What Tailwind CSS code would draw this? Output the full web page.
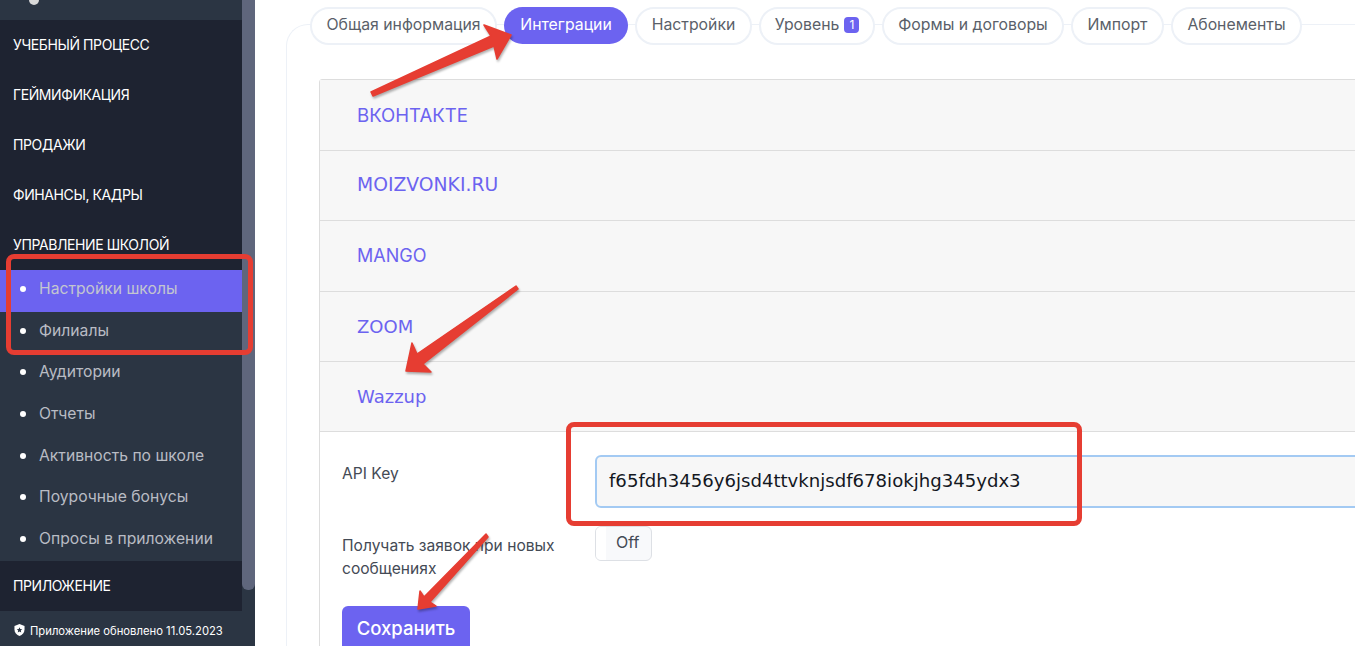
<!DOCTYPE html>
<html lang="ru">
<head>
    <meta charset="UTF-8">
    <title>Настройки школы</title>
    <script src="https://cdn.jsdelivr.net/npm/@tailwindcss/browser@4"></script>
</head>
<body class="h-[646px] overflow-hidden bg-white font-['Inter',sans-serif] relative">

    <div class="flex h-[646px]">
        <!-- Боковое меню -->
        <aside class="w-[242px] shrink-0 bg-[#2b3543] flex flex-col">
            <div class="h-5 pl-[29px] relative">
                <span class="block w-[10px] h-[10px] rounded-full bg-[#d9d9d9] -mt-[5px]"></span>
            </div>
            <div class="h-[50px] bg-[#1e2331] pl-[13px] pb-[2px] flex items-center text-[14px] tracking-[-0.4px] text-white">УЧЕБНЫЙ ПРОЦЕСС</div>
            <div class="h-[50px] bg-[#1e2331] pl-[13px] pb-[2px] flex items-center text-[14px] tracking-[-0.4px] text-white">ГЕЙМИФИКАЦИЯ</div>
            <div class="h-[50px] bg-[#1e2331] pl-[13px] pb-[2px] flex items-center text-[14px] tracking-[-0.4px] text-white">ПРОДАЖИ</div>
            <div class="h-[50px] bg-[#1e2331] pl-[13px] pb-[2px] flex items-center text-[14px] tracking-[-0.4px] text-white">ФИНАНСЫ, КАДРЫ</div>
            <div class="h-[50px] bg-[#1e2331] pl-[13px] pb-[2px] flex items-center text-[14px] tracking-[-0.4px] text-white">УПРАВЛЕНИЕ ШКОЛОЙ</div>

            <div class="h-[42px] bg-[#6c63f0] flex items-center pl-5 pb-[4px] text-[15.7px] text-[#c3c6cf]"><span class="w-[6px] h-[6px] rounded-full bg-white mr-[13px]"></span>Настройки школы</div>
            <div class="h-[41px] flex items-center pl-5 pb-[4px] text-[15.7px] text-[#b9bcc4]"><span class="w-[6px] h-[6px] rounded-full bg-white mr-[13px]"></span>Филиалы</div>
            <div class="h-[42px] flex items-center pl-5 pb-[4px] text-[15.7px] text-[#b9bcc4]"><span class="w-[6px] h-[6px] rounded-full bg-white mr-[13px]"></span>Аудитории</div>
            <div class="h-[42px] flex items-center pl-5 pb-[4px] text-[15.7px] text-[#b9bcc4]"><span class="w-[6px] h-[6px] rounded-full bg-white mr-[13px]"></span>Отчеты</div>
            <div class="h-[41px] flex items-center pl-5 pb-[4px] text-[15.7px] text-[#b9bcc4]"><span class="w-[6px] h-[6px] rounded-full bg-white mr-[13px]"></span>Активность по школе</div>
            <div class="h-[42px] flex items-center pl-5 pb-[4px] text-[15.7px] text-[#b9bcc4]"><span class="w-[6px] h-[6px] rounded-full bg-white mr-[13px]"></span>Поурочные бонусы</div>
            <div class="h-[41px] flex items-center pl-5 pb-[4px] text-[15.7px] text-[#b9bcc4]"><span class="w-[6px] h-[6px] rounded-full bg-white mr-[13px]"></span>Опросы в приложении</div>

            <div class="h-[50px] bg-[#1e2331] pl-[13px] pb-[2px] flex items-center text-[14px] tracking-[-0.4px] text-white">ПРИЛОЖЕНИЕ</div>
            <div class="h-[35px] pl-[14px] pt-[6px] flex items-center gap-[5px] text-[11.25px] text-white">
                <svg class="w-[11px] h-[12px] -mt-[3px]" viewBox="0 0 12 13"><path fill="#fff" d="M6 0 11.500 2v4c0 3.300-2.300 5.800-5.500 7C2.800 11.800.5 9.300.5 6V2z"/><path fill="#2b3543" d="M6 3.500 6.900 5.500 9 5.700 7.400 7.100 7.900 9.200 6 8.100 4.100 9.200 4.600 7.100 3 5.700 5.100 5.500z"/></svg>
                Приложение обновлено 11.05.2023
            </div>
        </aside>

        <!-- Полоса прокрутки -->
        <div class="w-[13px] shrink-0 bg-[#2b3543]">
            <div class="h-[590px] bg-[#5f667c] rounded-b-[6px]"></div>
        </div>

        <!-- Основная часть -->
        <main class="flex-1 min-w-0 pl-[31px] pt-[24px]">
            <div class="w-[1200px] h-[700px] relative border-l border-t border-[#edf1f7] rounded-tl-[22px] pl-[32px] pt-[54px]">
                <!-- Вкладки -->
                <div class="absolute left-[23px] -top-[18px] flex gap-[7px] text-[15.8px] text-[#5a5f69]">
                    <div class="w-[187px] h-[38px] pb-[2px] bg-white border-2 border-[#edf1f7] rounded-[19px] flex items-center justify-center">Общая информация</div>
                    <div class="w-[124px] h-[37px] pb-[2px] bg-[#6c63f0] rounded-[19px] flex items-center justify-center text-white">Интеграции</div>
                    <div class="w-[117px] h-[38px] pb-[2px] bg-white border-2 border-[#edf1f7] rounded-[19px] flex items-center justify-center">Настройки</div>
                    <div class="w-[116px] h-[38px] pb-[2px] bg-white border-2 border-[#edf1f7] rounded-[19px] flex items-center justify-center gap-[5px]">Уровень <span class="w-[15px] h-[16px] rounded-[4px] bg-[#6c63f0] text-white text-[12px] flex items-center justify-center">1</span></div>
                    <div class="w-[182px] h-[38px] pb-[2px] bg-white border-2 border-[#edf1f7] rounded-[19px] flex items-center justify-center">Формы и договоры</div>
                    <div class="w-[93px] h-[38px] pb-[2px] bg-white border-2 border-[#edf1f7] rounded-[19px] flex items-center justify-center">Импорт</div>
                    <div class="w-[131px] h-[38px] pb-[2px] bg-white border-2 border-[#edf1f7] rounded-[19px] flex items-center justify-center">Абонементы</div>
                </div>

                <!-- Аккордеон -->
                <div class="border border-[#dddddd] rounded-t-[3px]">
                    <div class="h-[71px] bg-[#f7f7f7] border-b border-[#dddddd] pl-[37px] pt-[2px] flex items-center text-[18.6px] text-[#6c63f0]">ВКОНТАКТЕ</div>
                    <div class="h-[70px] bg-[#f7f7f7] border-b border-[#dddddd] pl-[37px] flex items-center text-[18.75px] text-[#6c63f0] font-['DejaVu_Sans',sans-serif]">MOIZVONKI.RU</div>
                    <div class="h-[71px] bg-[#f7f7f7] border-b border-[#dddddd] pl-[37px] pb-[1px] flex items-center text-[18px] text-[#6c63f0]">MANGO</div>
                    <div class="h-[70px] bg-[#f7f7f7] border-b border-[#dddddd] pl-[37px] flex items-center text-[18px] text-[#6c63f0] font-['DejaVu_Sans',sans-serif]">ZOOM</div>
                    <div class="h-[70px] bg-[#f7f7f7] border-b border-[#dddddd] pl-[37px] flex items-center text-[18px] text-[#6c63f0] font-['DejaVu_Sans',sans-serif]">Wazzup</div>

                    <!-- Форма Wazzup -->
                    <div class="pl-[22px] pt-[23px]">
                        <div class="flex">
                            <div class="w-[253px] shrink-0 pt-[7px] text-[15.6px] text-[#444a55]">API Key</div>
                            <div class="w-[800px] shrink-0 h-[53px] bg-[#f7f7f7] border-2 border-[#a3caf3] rounded-[6px] pl-[12px] pb-[2px] flex items-center text-[18.1px] text-[#14181f] font-['DejaVu_Sans',sans-serif]">f65fdh3456y6jsd4ttvknjsdf678iokjhg345ydx3</div>
                        </div>
                        <div class="flex mt-[18px]">
                            <div class="w-[253px] shrink-0 pt-[8px] text-[15.6px] leading-[23px] text-[#444a55]">Получать заявок при новых<br>сообщениях</div>
                            <div class="w-[57px] h-[35px] bg-[#f8f9fb] border border-[#dde0e5] rounded-[6px] flex items-center text-[16px] text-[#444a55] overflow-hidden">
                                <span class="w-[10px] h-full bg-white mr-[10px]"></span><span class="pb-[3px]">Off</span>
                            </div>
                        </div>
                        <button class="mt-[26px] w-[128px] h-[46px] bg-[#6c63f0] rounded-[6px] text-[18.5px] font-medium text-white">Сохранить</button>
                    </div>
                </div>
            </div>
        </main>
    </div>

    <!-- Пометки поверх скриншота -->
    <div class="absolute left-[6px] top-[254px] w-[247px] h-[101px] border-[5px] border-[#e63d32] rounded-[8px]"></div>
    <div class="absolute left-[566px] top-[422px] w-[516px] h-[104px] border-[5px] border-[#e63d32] rounded-[8px]"></div>
    <svg class="absolute left-0 top-0 pointer-events-none drop-shadow-[1px_2px_1px_rgba(0,0,0,0.3)]" width="1355" height="646" viewBox="0 0 1355 646">
        <g fill="#e63d32" stroke="#e63d32" stroke-width="1.500" stroke-linejoin="round">
            <polygon points="371,92 491,36 484,25 511,35 497,59 494,46 373,96"/>
            <polygon points="516,286 417,354 412,343 406,371 431,372 423,364 518,289"/>
            <polygon points="486,534 424,597 420,591 418,609 436,606 430,602 488,537"/>
        </g>
    </svg>

</body>
</html>
